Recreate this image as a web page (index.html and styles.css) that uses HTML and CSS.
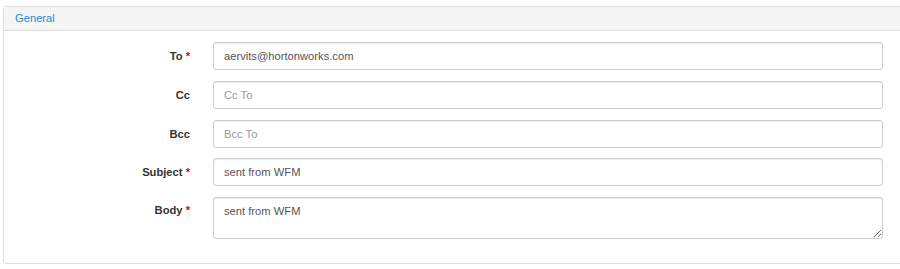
FILE: index.html
```html
<!DOCTYPE html>
<html>
<head>
<meta charset="utf-8">
<link rel="stylesheet" href="styles.css">
</head>
<body>
<div class="panel">
  <div class="panel-heading">General</div>
  <form class="panel-body">
    <label class="lbl" for="to">To <span class="req">*</span></label>
    <input id="to" class="field" type="text" value="aervits@hortonworks.com">
    <label class="lbl" for="cc">Cc</label>
    <input id="cc" class="field" type="text" placeholder="Cc To">
    <label class="lbl" for="bcc">Bcc</label>
    <input id="bcc" class="field" type="text" placeholder="Bcc To">
    <label class="lbl" for="subj">Subject <span class="req">*</span></label>
    <input id="subj" class="field" type="text" value="sent from WFM">
    <label class="lbl lbl-top" for="body">Body <span class="req">*</span></label>
    <textarea id="body" class="field area">sent from WFM</textarea>
  </form>
</div>
</body>
</html>
```

FILE: styles.css
```css
html { overflow: hidden; }
body {
  margin: 0;
  padding: 6px 0 0 3px;
  font-family: "Liberation Sans", Arial, sans-serif;
  font-size: 11.2px;
  color: #333;
  background: #fff;
}
.panel {
  width: 900px;
  border: 1px solid #ddd;
  border-radius: 3px;
  box-shadow: 0 1px 1px rgba(0,0,0,0.05);
  box-sizing: border-box;
  height: 258px;
}
.panel-heading {
  background: #f5f5f5;
  border-bottom: 1px solid #ddd;
  height: 23px;
  line-height: 23px;
  padding-left: 11px;
  color: #1a8ccf;
  font-size: 11.2px;
}
.panel-body {
  display: grid;
  grid-template-columns: 186px 670px;
  column-gap: 23px;
  row-gap: 10.75px;
  padding-top: 11px;
  margin: 0;
  align-items: center;
}
.lbl {
  text-align: right;
  font-weight: bold;
  color: #333;
  font-size: 11.2px;
}
.lbl-top {
  align-self: start;
  padding-top: 7px;
}
.req {
  color: #e00;
  font-weight: bold;
}
.field {
  box-sizing: border-box;
  height: 28px;
  border: 1px solid #ccc;
  border-radius: 3px;
  padding: 0 10px;
  font-family: "Liberation Sans", Arial, sans-serif;
  font-size: 11.2px;
  color: #555;
  background: #fff;
  box-shadow: inset 0 1px 1px rgba(0,0,0,0.075);
  margin: 0;
}
.field::placeholder { color: #999; }
.area {
  height: 42px;
  padding: 6px 10px;
  resize: vertical;
  line-height: 1.3;
}
```
